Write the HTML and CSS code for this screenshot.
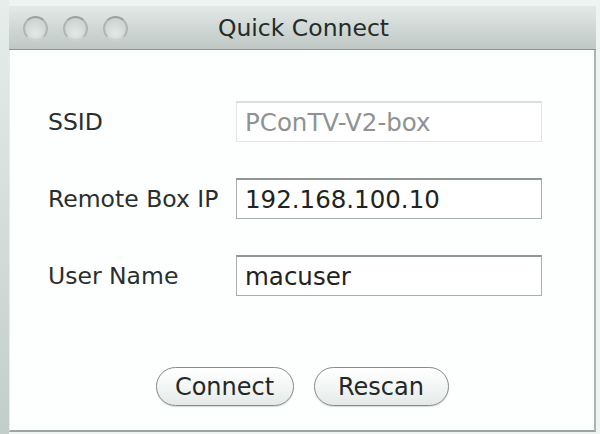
FILE: index.html
```html
<!DOCTYPE html>
<html>
<head>
<meta charset="utf-8">
<link rel="stylesheet" href="styles.css">
</head>
<body>
<div class="window">
  <div class="titlebar">
    <div class="lights">
      <span class="light"></span>
      <span class="light"></span>
      <span class="light"></span>
    </div>
    <div class="title">Quick Connect</div>
  </div>
  <div class="content">
    <div class="form">
      <div class="label">SSID</div>
      <div class="field disabled">PConTV-V2-box</div>
      <div class="label">Remote Box IP</div>
      <div class="field">192.168.100.10</div>
      <div class="label">User Name</div>
      <div class="field">macuser</div>
    </div>
    <div class="buttons">
      <div class="btn btn-connect">Connect</div>
      <div class="btn btn-rescan">Rescan</div>
    </div>
  </div>
</div>
</body>
</html>
```
FILE: styles.css
```css
html, body {
  margin: 0;
  padding: 0;
}
body {
  width: 600px;
  height: 434px;
  overflow: hidden;
  background: linear-gradient(to bottom, #e6eeec, #c3cdca) left top / 9px 100% no-repeat, #eef4f2;
  font-family: "DejaVu Sans", "Liberation Sans", sans-serif;
  color: #262b29;
  padding: 6px 0 0 9px;
  box-sizing: border-box;
}
.window {
  width: 587px;
  height: 426px;
  display: flex;
  flex-direction: column;
  box-sizing: border-box;
}
.titlebar {
  height: 44px;
  box-sizing: border-box;
  border-bottom: 1px solid #8d9592;
  background: linear-gradient(to bottom, #e3e9e7 0%, #d2dad7 45%, #bfc8c5 100%);
  display: flex;
  align-items: center;
  position: relative;
}
.lights {
  display: flex;
  gap: 15px;
  padding-left: 14px;
  padding-top: 1px;
}
.light {
  width: 25px;
  height: 25px;
  box-sizing: border-box;
  border-radius: 50%;
  border: 2px solid #aeb7b4;
  border-top-color: #9aa3a0;
  border-bottom-color: #cbd3d0;
  background: radial-gradient(circle at 50% 70%, #e2e8e6 0%, #d0d8d5 60%, #c6cecb 100%);
}
.title {
  position: absolute;
  left: 0;
  right: 0;
  top: 0;
  bottom: 0;
  display: flex;
  align-items: center;
  justify-content: center;
  font-size: 23.5px;
  color: #252b29;
  padding-left: 2px;
  padding-top: 1px;
}
.content {
  flex: 1;
  background: #fdfefe;
  border-right: 2px solid #adb5b2;
  border-bottom: 2px solid #9ea6a3;
  border-left: 1px solid #e6ecea;
  padding: 51px 0 0 38px;
}
.form {
  display: grid;
  grid-template-columns: 188px 306px;
  row-gap: 36px;
  align-items: center;
}
.label {
  font-size: 23.5px;
  color: #2a2f2d;
}
.field {
  height: 41px;
  box-sizing: border-box;
  border: 1px solid #a9afad;
  border-top: 2px solid #8f9694;
  padding-left: 8px;
  display: flex;
  align-items: center;
  font-size: 24.5px;
  color: #1f2422;
  background: #ffffff;
}
.field.disabled {
  border: 1px solid #e1e5e4;
  border-top: 2px solid #dadfdd;
  color: #8e9391;
}
.buttons {
  display: flex;
  justify-content: center;
  gap: 20px;
  margin-top: 71px;
  padding-right: 38px;
}
.btn {
  height: 39px;
  box-sizing: border-box;
  border-radius: 20px;
  border: 1.5px solid #858c8a;
  background: linear-gradient(to bottom, #ffffff 0%, #f3f6f5 50%, #e4e9e7 100%);
  box-shadow: 0 1px 1px rgba(0,0,0,0.15);
  display: flex;
  align-items: center;
  justify-content: center;
  font-size: 24px;
  color: #232826;
}
.btn-connect { width: 138px; }
.btn-rescan { width: 135px; }
```
